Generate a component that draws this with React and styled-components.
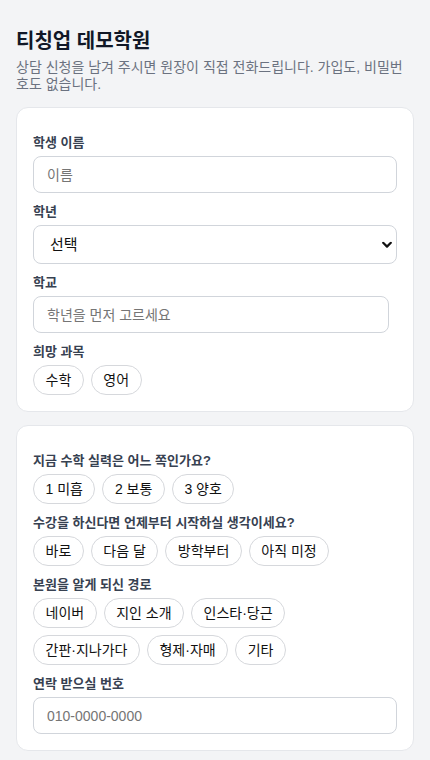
import React, { useState } from "react";
import styled, { createGlobalStyle } from "styled-components";

const GlobalStyle = createGlobalStyle`
  * {
    box-sizing: border-box;
  }
  body {
    margin: 0;
    background-color: #f3f4f6;
    font-family: "Liberation Sans", "Noto Sans CJK KR", sans-serif;
    color: #111827;
  }
`;

const Page = styled.main`
  padding: 28px 16px 16px;
`;

const Header = styled.header`
  margin-bottom: 14px;
`;

const Title = styled.h1`
  margin: 0;
  font-size: 20px;
  line-height: 26px;
  font-weight: 700;
  color: #111827;
`;

const Subtitle = styled.p`
  margin: 5px 0 0;
  font-size: 14px;
  line-height: 17px;
  color: #6b7280;
`;

const Cards = styled.div`
  display: flex;
  flex-direction: column;
  gap: 13px;
`;

const Card = styled.section`
  background-color: #ffffff;
  border: 1px solid #e5e7eb;
  border-radius: 12px;
  padding: 16px;
`;

const Field = styled.div`
  margin-top: 10px;
`;

const Label = styled.label`
  display: block;
  margin-bottom: 4px;
  font-size: 13px;
  line-height: 18px;
  font-weight: 700;
  color: #374151;
`;

const Input = styled.input`
  display: block;
  width: ${props => (props.narrow ? "calc(100% - 8px)" : "100%")};
  height: 37px;
  padding: 0 13px;
  border: 1px solid #d1d5db;
  border-radius: 8px;
  background-color: #ffffff;
  font-family: inherit;
  font-size: 14px;
  color: #111827;
  outline: none;

  ::placeholder {
    color: #8e9299;
  }
`;

const SelectWrap = styled.div`
  position: relative;
`;

const Select = styled.select`
  display: block;
  width: 100%;
  height: 39px;
  padding: 0 16px;
  border: 1px solid #d1d5db;
  border-radius: 8px;
  background-color: #ffffff;
  appearance: none;
  -webkit-appearance: none;
  font-family: inherit;
  font-size: 15px;
  color: #111111;
  outline: none;
`;

const Chevron = styled.svg`
  position: absolute;
  right: 5px;
  top: 50%;
  transform: translateY(-50%);
  pointer-events: none;
`;

const ChipRow = styled.div`
  display: flex;
  flex-wrap: wrap;
  gap: 7px;
`;

const Chip = styled.button`
  height: 30px;
  padding: 0 11.5px;
  border: 1px solid #d6d8dc;
  border-radius: 999px;
  background-color: ${props => (props.active ? "#eef2ff" : "#ffffff")};
  font-family: inherit;
  font-size: 14px;
  line-height: 28px;
  color: #111111;
  cursor: pointer;
`;

const questions = [
  {
    label: "지금 수학 실력은 어느 쪽인가요?",
    options: ["1 미흡", "2 보통", "3 양호"]
  },
  {
    label: "수강을 하신다면 언제부터 시작하실 생각이세요?",
    options: ["바로", "다음 달", "방학부터", "아직 미정"]
  },
  {
    label: "본원을 알게 되신 경로",
    options: ["네이버", "지인 소개", "인스타·당근", "간판·지나가다", "형제·자매", "기타"]
  }
];

const ChipGroup = ({ options }) => {
  const [picked, setPicked] = useState(null);
  return (
    <ChipRow>
      {options.map(option => (
        <Chip
          key={option}
          type="button"
          active={picked === option ? 1 : 0}
          onClick={() => setPicked(option)}
        >
          {option}
        </Chip>
      ))}
    </ChipRow>
  );
};

export default function App() {
  return (
    <Page>
      <GlobalStyle />
      <Header>
        <Title>티칭업 데모학원</Title>
        <Subtitle>
          상담 신청을 남겨 주시면 원장이 직접 전화드립니다. 가입도, 비밀번호도 없습니다.
        </Subtitle>
      </Header>
      <Cards>
        <Card>
          <Field>
            <Label>학생 이름</Label>
            <Input placeholder="이름" />
          </Field>
          <Field>
            <Label>학년</Label>
            <SelectWrap>
              <Select defaultValue="">
                <option value="">선택</option>
                <option>중1</option>
                <option>중2</option>
                <option>중3</option>
                <option>고1</option>
                <option>고2</option>
                <option>고3</option>
              </Select>
              <Chevron width="10" height="7" viewBox="0 0 10 7">
                <path
                  d="M1.2 1.3 L5 5.1 L8.8 1.3"
                  fill="none"
                  stroke="#111"
                  strokeWidth="2.2"
                  strokeLinecap="round"
                  strokeLinejoin="round"
                />
              </Chevron>
            </SelectWrap>
          </Field>
          <Field>
            <Label>학교</Label>
            <Input narrow placeholder="학년을 먼저 고르세요" />
          </Field>
          <Field>
            <Label>희망 과목</Label>
            <ChipGroup options={["수학", "영어"]} />
          </Field>
        </Card>
        <Card>
          {questions.map(q => (
            <Field key={q.label}>
              <Label>{q.label}</Label>
              <ChipGroup options={q.options} />
            </Field>
          ))}
          <Field>
            <Label>연락 받으실 번호</Label>
            <Input placeholder="010-0000-0000" />
          </Field>
        </Card>
      </Cards>
    </Page>
  );
}
